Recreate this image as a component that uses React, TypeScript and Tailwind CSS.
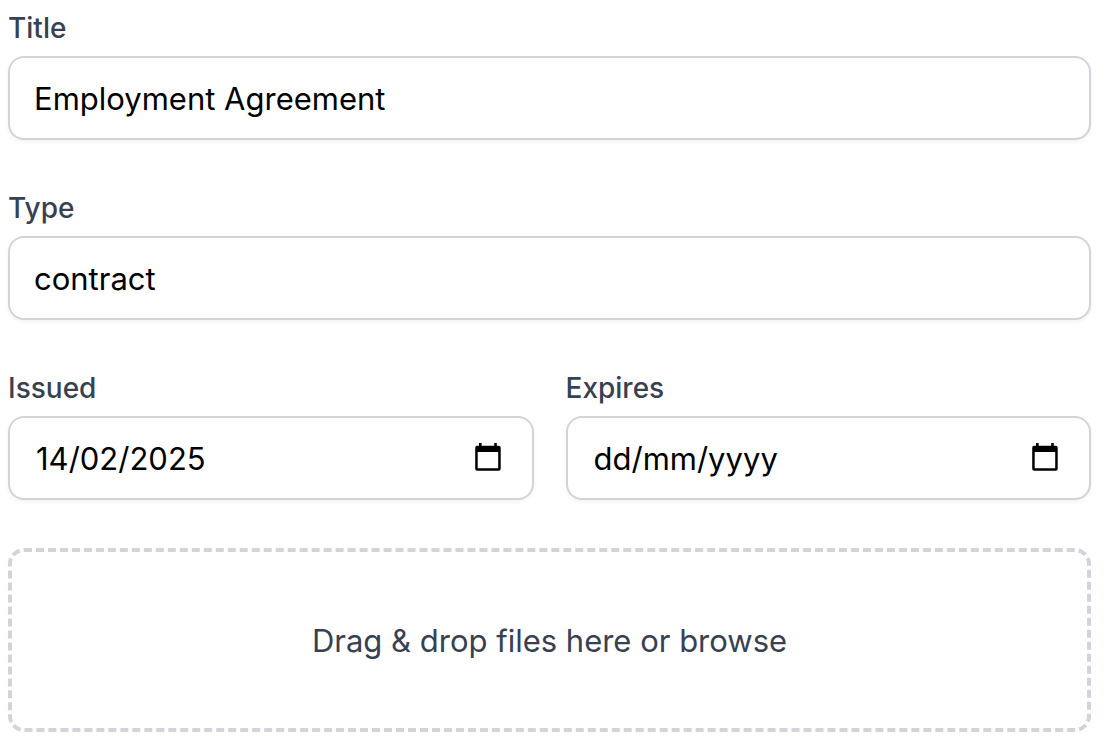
import { useState } from "react";

const inputClass =
  "w-full h-[84px] rounded-2xl border-2 border-[#d1d5db] bg-white pr-6 text-[31px] text-black shadow-[0_2px_4px_0_rgba(0,0,0,0.05)] outline-none";
const labelClass = "block h-10 mb-2 text-[28px] leading-10 font-medium text-[#374151]";

function CalendarIcon() {
  return (
    <svg width="26" height="28" viewBox="0 0 26 28" fill="none" aria-hidden="true">
      <path
        fill="#000"
        fillRule="evenodd"
        d="M4 0h2.6v2.7h12.6V0h2.6v2.7h1.9a2 2 0 0 1 2 2v21a2 2 0 0 1-2 2H2.2a2 2 0 0 1-2-2v-21a2 2 0 0 1 2-2H4V0ZM2.7 9v16.3h20.5V9H2.7Z"
      />
    </svg>
  );
}

type DateFieldProps = {
  id: string;
  label: string;
  value: string;
  onChange: (value: string) => void;
};

function DateField({ id, label, value, onChange }: DateFieldProps) {
  return (
    <div>
      <label htmlFor={id} className={labelClass}>
        {label}
      </label>
      <div className="relative">
        <input
          id={id}
          type="text"
          placeholder="dd/mm/yyyy"
          className={`${inputClass} pl-[26px] placeholder:text-black placeholder:opacity-100`}
          value={value}
          onChange={(e) => onChange(e.target.value)}
        />
        <button
          type="button"
          aria-label={`Choose ${label} date`}
          className="absolute top-0 bottom-0.5 right-8 flex items-center pr-px cursor-pointer"
        >
          <CalendarIcon />
        </button>
      </div>
    </div>
  );
}

export default function App() {
  const [title, setTitle] = useState("Employment Agreement");
  const [type, setType] = useState("contract");
  const [issued, setIssued] = useState("14/02/2025");
  const [expires, setExpires] = useState("");

  return (
    <form className="w-full bg-white pt-2 pl-2 pr-[19px] pb-5 font-['Inter',sans-serif]">
      <div className="mb-12">
        <label htmlFor="title" className={labelClass}>
          Title
        </label>
        <input
          id="title"
          type="text"
          className={`${inputClass} pl-6`}
          value={title}
          onChange={(e) => setTitle(e.target.value)}
        />
      </div>
      <div className="mb-12">
        <label htmlFor="type" className={labelClass}>
          Type
        </label>
        <input
          id="type"
          type="text"
          className={`${inputClass} pl-6`}
          value={type}
          onChange={(e) => setType(e.target.value)}
        />
      </div>
      <div className="grid grid-cols-2 gap-8 mb-12">
        <DateField id="issued" label="Issued" value={issued} onChange={setIssued} />
        <DateField id="expires" label="Expires" value={expires} onChange={setExpires} />
      </div>
      <label className="flex h-[184px] items-center justify-center rounded-2xl border-4 border-dashed border-[#d1d5db] pt-0.5 text-[31px] text-[#374151] cursor-pointer">
        Drag &amp; drop files here or browse
        <input type="file" multiple className="sr-only" />
      </label>
    </form>
  );
}
